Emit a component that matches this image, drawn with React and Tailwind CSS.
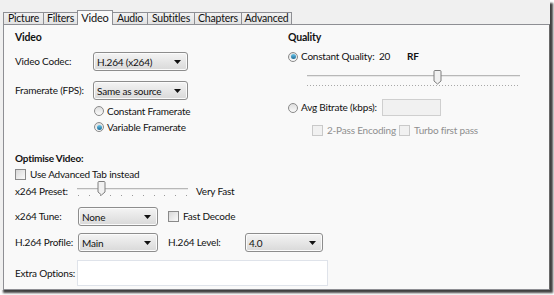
import React from 'react'

const tabs = [
  ['Picture', 'w-[41px]'],
  ['Filters', 'w-[35px]'],
  ['Video', 'w-[36px]'],
  ['Audio', 'w-[36px]'],
  ['Subtitles', 'w-[48px]'],
  ['Chapters', 'w-[48px]'],
  ['Advanced', 'w-[51px]'],
]

function Select({ value, className }) {
  return (
    <div
      className={`flex h-[19px] items-center justify-between rounded-[3px] border border-[#8d8d8d] bg-gradient-to-b from-[#f4f4f4] to-[#d9d9d9] pl-[3px] pr-[6px] shadow-[inset_0_0_0_1px_#fbfbfb] ${className}`}
    >
      <span className="whitespace-nowrap leading-none">{value}</span>
      <svg width="7" height="4" viewBox="0 0 7 4">
        <path d="M0 0h7L3.5 4z" fill="#111" />
      </svg>
    </div>
  )
}

function Radio({ checked, label, className = '' }) {
  return (
    <div className={`flex h-[12px] items-center gap-[3px] whitespace-nowrap ${className}`}>
      <span className="flex h-[10px] w-[10px] items-center justify-center rounded-full border border-[#8a8a8a] bg-gradient-to-b from-[#dedede] to-[#fafafa]">
        {checked && <span className="h-[5px] w-[5px] rounded-full bg-gradient-to-b from-[#6cc8ec] to-[#1a6a96]" />}
      </span>
      <span>{label}</span>
    </div>
  )
}

function Check({ label, disabled, className = '' }) {
  return (
    <div className={`flex h-[12px] items-center gap-[4px] whitespace-nowrap ${className}`}>
      <span
        className={`h-[11px] w-[11px] border ${disabled ? 'border-[#c9c9c9] bg-[#f1f1f1]' : 'border-[#8a8a8a] bg-gradient-to-br from-[#d8d8d8] to-[#fafafa]'}`}
      />
      <span className={disabled ? 'text-[#8f8f8f]' : ''}>{label}</span>
    </div>
  )
}

function Thumb() {
  return (
    <svg width="9" height="15" viewBox="0 0 9 15" className="absolute top-[-7px]">
      <path d="M1 1.5Q1 .5 2 .5h5q1 0 1 1V11l-3.5 3L1 11z" fill="#f1f1f1" stroke="#7e7e7e" />
    </svg>
  )
}

export default function App() {
  return (
    <div className="h-[295px] w-[554px] bg-white" style={{ fontFamily: 'Lato, sans-serif' }}>
      <div className="flex h-[290px] w-[550px] flex-col bg-[#f0f0f0] pl-[3px] pt-[10px] text-[10px] tracking-[-0.2px] text-[#111] shadow-[3px_3px_2px_rgba(0,0,0,0.75)]">
        <div className="flex h-[14px] items-end pl-px">
          {tabs.map(([t, w]) =>
            t === 'Video' ? (
              <div
                key={t}
                className={`relative z-10 -mb-px -ml-px flex h-[15px] items-center justify-center border border-b-0 border-[#8e8f94] bg-[#f9f9f9] text-[11px] ${w}`}
              >
                {t}
              </div>
            ) : (
              <div
                key={t}
                className={`-ml-px flex h-[12px] items-center justify-center border border-b-0 border-[#8e8f94] bg-gradient-to-b from-[#f2f2f2] to-[#e2e2e2] text-[10.5px] leading-none ${w}`}
              >
                {t}
              </div>
            )
          )}
        </div>
        <div className="flex flex-1 flex-col border border-[#8e8f94] border-r-[#6a6a6a] bg-[#f9f9f9] pl-[11px] pt-[6px]">
          <div className="flex items-start">
            <div className="w-[273px]">
              <div className="flex h-[14px] items-center text-[10.5px] font-bold">Video</div>
              <div className="mt-[7px] flex items-center">
                <span className="w-[78px] whitespace-nowrap">Video Codec:</span>
                <Select value="H.264 (x264)" className="w-[95px]" />
              </div>
              <div className="mt-[10px] flex items-center">
                <span className="w-[78px] whitespace-nowrap">Framerate (FPS):</span>
                <Select value="Same as source" className="w-[95px]" />
              </div>
              <div className="ml-[79px] mt-[5px] flex flex-col gap-[4px]">
                <Radio label="Constant Framerate" />
                <Radio label="Variable Framerate" checked />
              </div>
            </div>
            <div className="flex-1">
              <div className="flex h-[14px] items-center text-[10.5px] font-bold">Quality</div>
              <div className="mt-[4px] flex items-center">
                <Radio label="Constant Quality:" checked className="w-[91px]" />
                <span className="w-[28px]">20</span>
                <span className="font-bold">RF</span>
              </div>
              <div className="relative ml-[19px] mt-[11px] h-[11px] w-[213px]">
                <div className="h-[2px] w-full border-t border-[#b8b8b8] bg-[#e8e8e8]" />
                <div className="absolute left-[126px]">
                  <Thumb />
                </div>
                <div className="mt-[8px] h-[1px] w-full bg-[repeating-linear-gradient(90deg,#a8a8a8_0_1px,transparent_1px_3px)]" />
              </div>
              <div className="mt-[13px] flex h-[17px] items-center">
                <Radio label="Avg Bitrate (kbps):" className="w-[94px]" />
                <div className="h-[17px] w-[59px] border border-[#cfcfcf] bg-[#f1f1f1]" />
              </div>
              <div className="ml-[24px] mt-[8px] flex items-center">
                <Check label="2-Pass Encoding" disabled className="w-[87px]" />
                <Check label="Turbo first pass" disabled />
              </div>
            </div>
          </div>

          <div className="mt-[15px] flex h-[14px] items-center font-bold">Optimise Video:</div>
          <div className="mt-[3px]">
            <Check label="Use Advanced Tab instead" />
          </div>
          <div className="mt-[5px] flex h-[12px] items-center">
            <span className="w-[62px] whitespace-nowrap">x264 Preset:</span>
            <div className="relative h-[12px] w-[111px]">
              <div className="mt-[3px] h-[2px] w-full border-t border-[#b8b8b8] bg-[#e8e8e8]" />
              <div className="absolute left-[20px] top-[3px]">
                <Thumb />
              </div>
              <div className="mt-[5px] flex justify-between px-[1px]">
                {Array.from({ length: 11 }).map((_, i) => (
                  <span key={i} className="h-[1px] w-[1px] bg-[#9a9a9a]" />
                ))}
              </div>
            </div>
            <span className="ml-[8px] whitespace-nowrap">Very Fast</span>
          </div>
          <div className="mt-[10px] flex items-center">
            <span className="w-[63px] whitespace-nowrap">x264 Tune:</span>
            <Select value="None" className="w-[80px]" />
            <Check label="Fast Decode" className="ml-[10px]" />
          </div>
          <div className="mt-[7px] flex items-center">
            <span className="w-[63px] whitespace-nowrap">H.264 Profile:</span>
            <Select value="Main" className="w-[80px]" />
            <span className="ml-[10px] w-[77px] whitespace-nowrap">H.264 Level:</span>
            <Select value="4.0" className="w-[78px]" />
          </div>
          <div className="mt-[8px] flex items-center">
            <span className="w-[62px] whitespace-nowrap">Extra Options:</span>
            <div className="h-[26px] w-[251px] border border-[#dfe3ea] bg-white" />
          </div>
        </div>
      </div>
    </div>
  )
}
